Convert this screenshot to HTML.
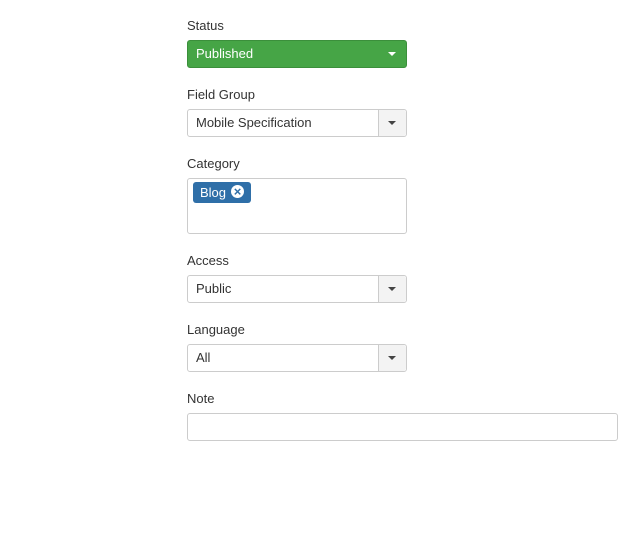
<!DOCTYPE html>
<html><head><style>
body{margin:0;background:#fff;font-family:"Liberation Sans",Helvetica,Arial,sans-serif;font-size:13px;color:#333;}
.l{position:absolute;left:187px;font-size:13px;}
.s{position:absolute;left:187px;width:218px;height:26px;border:1px solid #ccc;border-radius:3px;background:#fff;}
.s span{position:absolute;left:8px;top:5px;}
.s .b{position:absolute;right:0;top:0;width:27px;height:26px;border-left:1px solid #ccc;background:#f3f3f3;border-radius:0 3px 3px 0}
.car{position:absolute;width:0;height:0;border-left:4px solid transparent;border-right:4px solid transparent;border-top:4px solid #444;}
</style></head><body>
<div class="l" style="top:18px">Status</div>
<div class="s" style="top:40px;background:#46a546;border-color:#3b8f3b;color:#fff"><span>Published</span><div class="car" style="right:10px;top:11px;border-top-color:#fff"></div></div>
<div class="l" style="top:87px">Field Group</div>
<div class="s" style="top:109px"><span>Mobile Specification</span><div class="b"><div class="car" style="left:9px;top:11px"></div></div></div>
<div class="l" style="top:156px">Category</div>
<div style="position:absolute;left:187px;top:178px;width:218px;height:54px;border:1px solid #ccc;border-radius:3px"></div>
<div style="position:absolute;left:193px;top:182px;width:58px;height:21px;background:#2f6fa8;border-radius:3px;color:#fff"><span style="position:absolute;left:7px;top:3px">Blog</span><div style="position:absolute;left:38px;top:3px;width:13px;height:13px;border-radius:50%;background:#fff;color:#2f6fa8;font-size:13px;font-weight:bold;line-height:13px;text-align:center">×</div></div>
<div class="l" style="top:253px">Access</div>
<div class="s" style="top:275px"><span>Public</span><div class="b"><div class="car" style="left:9px;top:11px"></div></div></div>
<div class="l" style="top:322px">Language</div>
<div class="s" style="top:344px"><span>All</span><div class="b"><div class="car" style="left:9px;top:11px"></div></div></div>
<div class="l" style="top:391px">Note</div>
<div style="position:absolute;left:187px;top:413px;width:429px;height:26px;border:1px solid #ccc;border-radius:3px"></div>
</body></html>
